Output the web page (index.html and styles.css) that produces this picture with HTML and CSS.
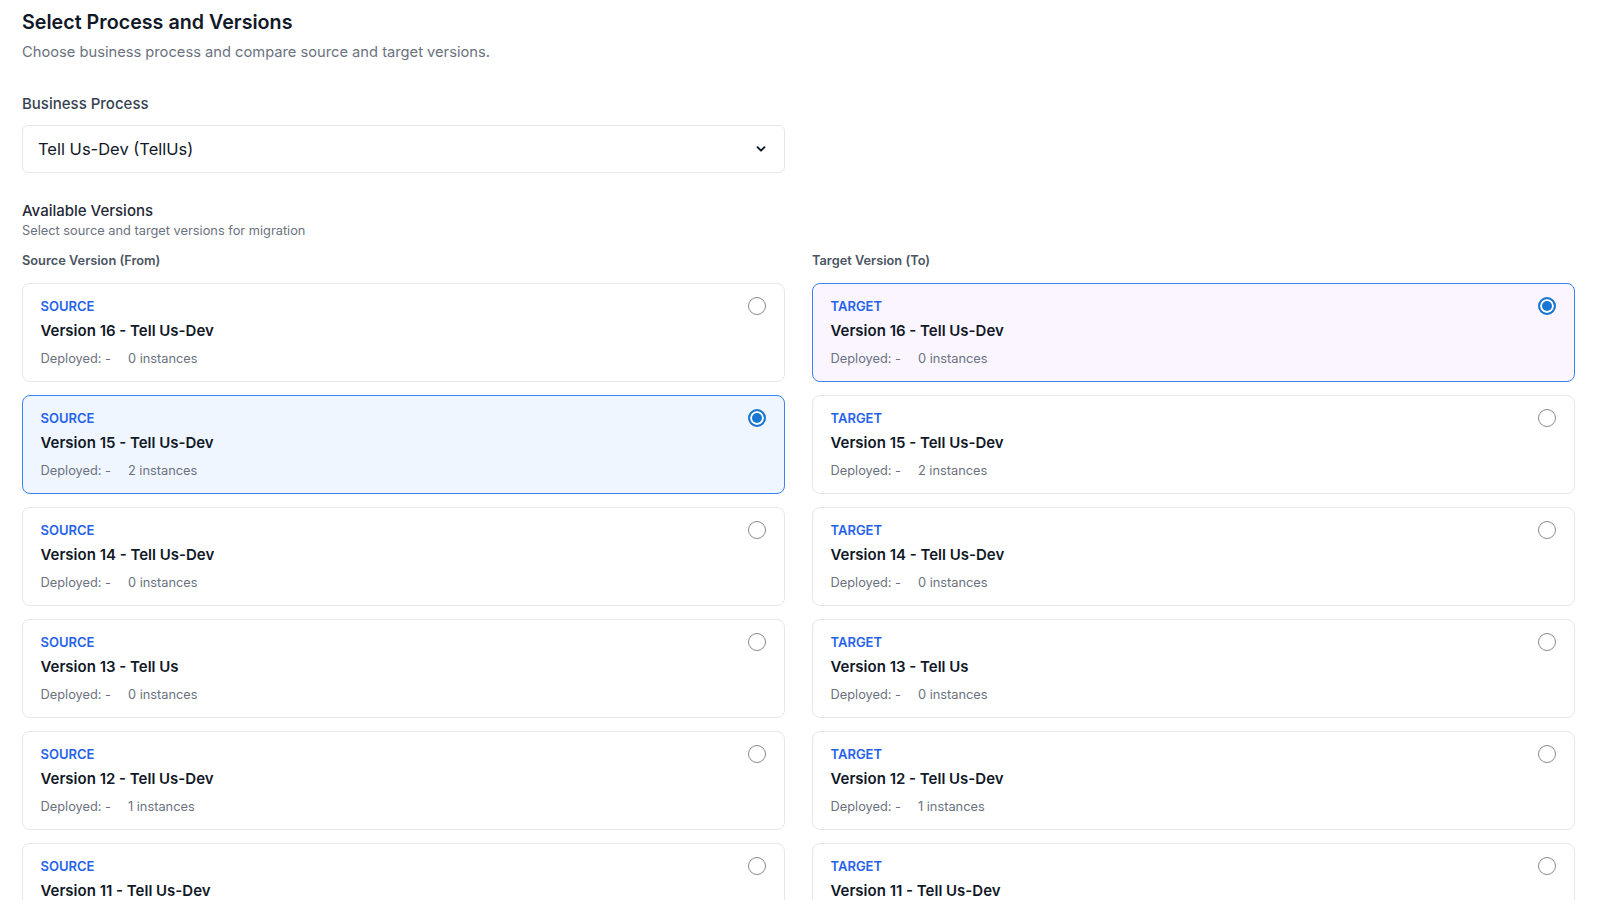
FILE: index.html
```html
<!DOCTYPE html>
<html lang="en">

<head>
  <meta charset="UTF-8">
  <meta name="viewport" content="width=device-width, initial-scale=1.0">
  <title>Select Process and Versions</title>
  <link rel="stylesheet" href="styles.css">
</head>

<body>
  <div class="page">
    <h1 class="title">Select Process and Versions</h1>
    <p class="subtitle">Choose business process and compare source and target versions.</p>

    <div class="field-label">Business Process</div>
    <div class="select">
      <span>Tell Us-Dev (TellUs)</span>
      <svg width="12" height="12" viewBox="0 0 12 12"><path d="M2.5 4.2 6 7.7 9.5 4.2" fill="none" stroke="#111827" stroke-width="1.9" stroke-linecap="round" stroke-linejoin="round"/></svg>
    </div>

    <div class="section-title">Available Versions</div>
    <div class="section-sub">Select source and target versions for migration</div>

    <div class="columns">
      <div class="column">
        <div class="col-head">Source Version (From)</div>
        <div class="card">
          <div class="card-body">
            <div class="tag">SOURCE</div>
            <div class="name">Version 16 - Tell Us-Dev</div>
            <div class="meta"><span>Deployed: -</span><span>0 instances</span></div>
          </div>
          <span class="radio"></span>
        </div>
        <div class="card card-source-on">
          <div class="card-body">
            <div class="tag">SOURCE</div>
            <div class="name">Version 15 - Tell Us-Dev</div>
            <div class="meta"><span>Deployed: -</span><span>2 instances</span></div>
          </div>
          <span class="radio checked"></span>
        </div>
        <div class="card">
          <div class="card-body">
            <div class="tag">SOURCE</div>
            <div class="name">Version 14 - Tell Us-Dev</div>
            <div class="meta"><span>Deployed: -</span><span>0 instances</span></div>
          </div>
          <span class="radio"></span>
        </div>
        <div class="card">
          <div class="card-body">
            <div class="tag">SOURCE</div>
            <div class="name">Version 13 - Tell Us</div>
            <div class="meta"><span>Deployed: -</span><span>0 instances</span></div>
          </div>
          <span class="radio"></span>
        </div>
        <div class="card">
          <div class="card-body">
            <div class="tag">SOURCE</div>
            <div class="name">Version 12 - Tell Us-Dev</div>
            <div class="meta"><span>Deployed: -</span><span>1 instances</span></div>
          </div>
          <span class="radio"></span>
        </div>
        <div class="card">
          <div class="card-body">
            <div class="tag">SOURCE</div>
            <div class="name">Version 11 - Tell Us-Dev</div>
            <div class="meta"><span>Deployed: -</span><span>0 instances</span></div>
          </div>
          <span class="radio"></span>
        </div>
      </div>

      <div class="column">
        <div class="col-head">Target Version (To)</div>
        <div class="card card-target-on">
          <div class="card-body">
            <div class="tag">TARGET</div>
            <div class="name">Version 16 - Tell Us-Dev</div>
            <div class="meta"><span>Deployed: -</span><span>0 instances</span></div>
          </div>
          <span class="radio checked"></span>
        </div>
        <div class="card">
          <div class="card-body">
            <div class="tag">TARGET</div>
            <div class="name">Version 15 - Tell Us-Dev</div>
            <div class="meta"><span>Deployed: -</span><span>2 instances</span></div>
          </div>
          <span class="radio"></span>
        </div>
        <div class="card">
          <div class="card-body">
            <div class="tag">TARGET</div>
            <div class="name">Version 14 - Tell Us-Dev</div>
            <div class="meta"><span>Deployed: -</span><span>0 instances</span></div>
          </div>
          <span class="radio"></span>
        </div>
        <div class="card">
          <div class="card-body">
            <div class="tag">TARGET</div>
            <div class="name">Version 13 - Tell Us</div>
            <div class="meta"><span>Deployed: -</span><span>0 instances</span></div>
          </div>
          <span class="radio"></span>
        </div>
        <div class="card">
          <div class="card-body">
            <div class="tag">TARGET</div>
            <div class="name">Version 12 - Tell Us-Dev</div>
            <div class="meta"><span>Deployed: -</span><span>1 instances</span></div>
          </div>
          <span class="radio"></span>
        </div>
        <div class="card">
          <div class="card-body">
            <div class="tag">TARGET</div>
            <div class="name">Version 11 - Tell Us-Dev</div>
            <div class="meta"><span>Deployed: -</span><span>0 instances</span></div>
          </div>
          <span class="radio"></span>
        </div>
      </div>
    </div>
  </div>
</body>

</html>
```

FILE: styles.css
```css
* {
  padding: 0;
  margin: 0;
  box-sizing: border-box;
}

body {
  font-family: Inter, "Noto Sans", sans-serif;
  color: #111827;
  background-color: #fff;
  overflow: hidden;
}

.page {
  width: 1597px;
  padding: 8px 0 0 22px;
}

.title {
  font-size: 19.7px;
  line-height: 28px;
  font-weight: 600;
  color: #111827;
}

.subtitle {
  margin-top: 5px;
  font-size: 14.7px;
  line-height: 22px;
  color: #6b7280;
}

.field-label {
  margin-top: 30px;
  font-size: 15px;
  line-height: 22px;
  font-weight: 500;
  color: #374151;
}

.select {
  margin-top: 10px;
  width: 763px;
  height: 48px;
  border: 1px solid #e5e7eb;
  border-radius: 6px;
  display: flex;
  align-items: center;
  justify-content: space-between;
  padding: 0 17px 0 15px;
  font-size: 16.5px;
  color: #111827;
}

.section-title {
  margin-top: 28px;
  font-size: 15px;
  line-height: 20px;
  font-weight: 500;
  color: #1f2937;
}

.section-sub {
  margin-top: 1px;
  font-size: 12.8px;
  line-height: 18px;
  color: #6b7280;
}

.columns {
  margin-top: 12px;
  display: grid;
  grid-template-columns: 763px 763px;
  column-gap: 27px;
}

.column {
  display: flex;
  flex-direction: column;
  gap: 13px;
}

.col-head {
  font-size: 12.8px;
  line-height: 18px;
  font-weight: 600;
  color: #4b5563;
}

.card {
  height: 99px;
  border: 1px solid #e5e7eb;
  border-radius: 8px;
  background-color: #fff;
  display: flex;
  justify-content: space-between;
  align-items: flex-start;
  padding: 14px 18px 0 17.5px;
}

.card-source-on {
  background-color: #eff6ff;
  border-color: #3b82f6;
}

.card-target-on {
  background-color: #faf5ff;
  border-color: #3b82f6;
}

.tag {
  font-size: 13px;
  line-height: 16px;
  font-weight: 600;
  color: #2563eb;
}

.name {
  margin-top: 6.5px;
  font-size: 15px;
  line-height: 20px;
  font-weight: 600;
  color: #111827;
}

.meta {
  margin-top: 9.5px;
  font-size: 12.8px;
  line-height: 18px;
  color: #6b7280;
  display: flex;
  gap: 17px;
}

.radio {
  margin-top: -1px;
  width: 18px;
  height: 18px;
  border: 1.5px solid #8a8a8a;
  border-radius: 50%;
  flex-shrink: 0;
}

.radio.checked {
  border: 2px solid #1976d2;
  background-color: #1976d2;
  box-shadow: inset 0 0 0 2px #fff;
}
```
